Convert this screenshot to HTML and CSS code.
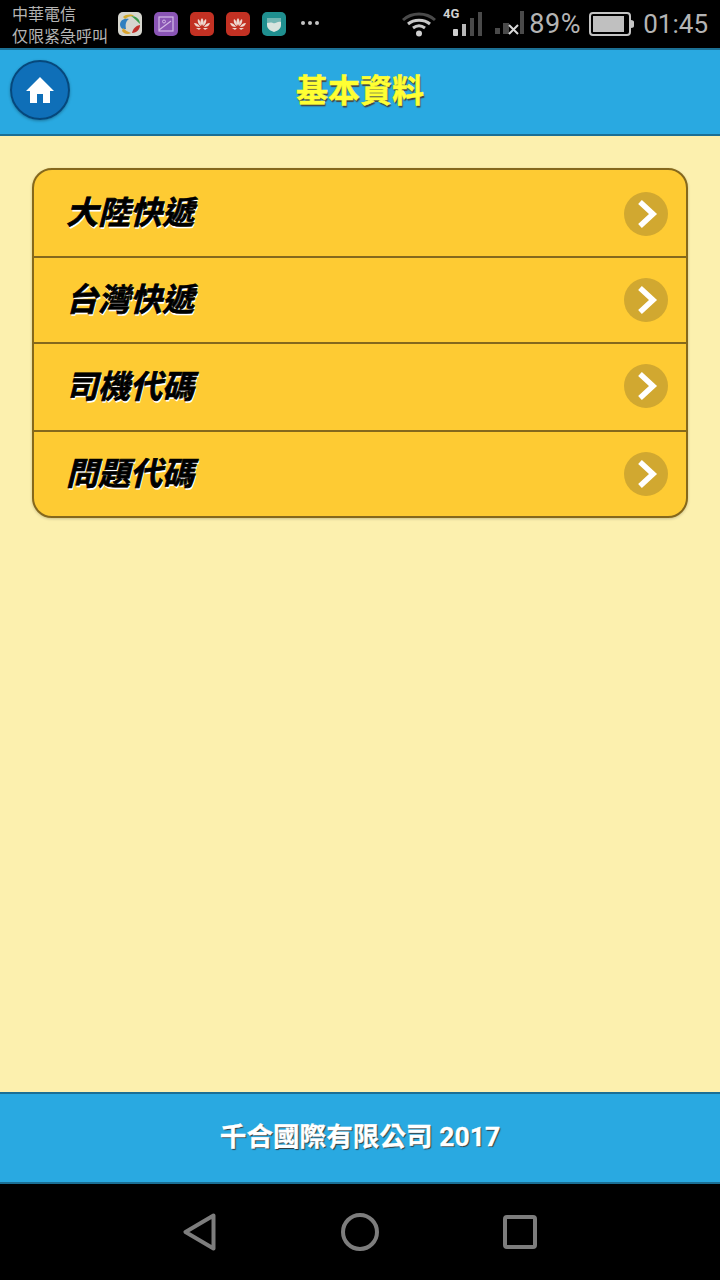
FILE: index.html

```html
<!DOCTYPE html>
<html lang="zh-Hant">
<head>
  <meta charset="UTF-8">
  <title>基本資料</title>
  <link rel="stylesheet" href="styles.css">
</head>
<body>
  <div class="status-bar">
    <div class="carrier">
      <div>中華電信</div>
      <div>仅限紧急呼叫</div>
    </div>
    <div class="notify-icons">
      <svg class="app-icon" viewBox="0 0 24 24">
        <rect width="24" height="24" rx="5" fill="#d6d6ce"/>
        <path d="M2 13c0-5 4-7 9-6-3 2-4 5-3 10-3 1-5 0-6-4z" fill="#2f7fc0"/>
        <path d="M5 5c3-3 9-3 11-1-4 0-7 1-9 3z" fill="#d0a92c"/>
        <path d="M13 4c5 0 9 3 9 8-3-3-5-5-9-8z" fill="#3a9a4a"/>
        <path d="M22 13c0 4-3 8-8 8 1-4 3-7 8-8z" fill="#c0302a"/>
        <path d="M5 16c2 2 5 4 8 5-3 2-7 1-9-2z" fill="#d9a32e"/>
      </svg>
      <svg class="app-icon" viewBox="0 0 24 24">
        <rect width="24" height="24" rx="5" fill="#8a55b5"/>
        <rect x="5" y="5" width="14" height="14" fill="none" stroke="#d3b9e6" stroke-width="1.200"/>
        <circle cx="10" cy="9.500" r="1.500" fill="none" stroke="#d3b9e6"/>
        <path d="M5 18l12-9" stroke="#d3b9e6" stroke-width="1.200"/>
      </svg>
      <svg class="app-icon" viewBox="0 0 24 24">
        <rect width="24" height="24" rx="5" fill="#c23123"/>
        <path d="M12 6c2 2 2 5 0 8-2-3-2-6 0-8zM8 7c2 1 3 4 3 7-2-1-4-4-3-7zM16 7c1 3-1 6-3 7 0-3 1-6 3-7zM4 11c3 0 5 2 6 4-3 0-5-1-6-4zM20 11c-1 3-3 4-6 4 1-2 3-4 6-4zM6 16h5l-2 2zM18 16h-5l2 2z" fill="#eed9d0"/>
      </svg>
      <svg class="app-icon" viewBox="0 0 24 24">
        <rect width="24" height="24" rx="5" fill="#c23123"/>
        <path d="M12 6c2 2 2 5 0 8-2-3-2-6 0-8zM8 7c2 1 3 4 3 7-2-1-4-4-3-7zM16 7c1 3-1 6-3 7 0-3 1-6 3-7zM4 11c3 0 5 2 6 4-3 0-5-1-6-4zM20 11c-1 3-3 4-6 4 1-2 3-4 6-4zM6 16h5l-2 2zM18 16h-5l2 2z" fill="#eed9d0"/>
      </svg>
      <svg class="app-icon" viewBox="0 0 24 24">
        <rect width="24" height="24" rx="5" fill="#1f8f8f"/>
        <path d="M5 6h14v7c0 4-4 6-7 7-3-1-7-3-7-7z" fill="#d8e4de"/>
        <path d="M5 6h14v4c-4-1-5 2-8 1-3-1-4 0-6 0z" fill="#1f8f8f" opacity=".55"/>
      </svg>
      <div class="more-dots">
        <span></span><span></span><span></span>
      </div>
    </div>
    <div class="status-right">
      <svg class="wifi" viewBox="0 0 34 26">
        <path d="M1 9c9-8 23-8 32 0" fill="none" stroke="#4a4a4a" stroke-width="3"/>
        <path d="M6 13c6-5 16-5 22 0" fill="none" stroke="#c8c8c8" stroke-width="3"/>
        <path d="M11 17c4-3 8-3 12 0" fill="none" stroke="#c8c8c8" stroke-width="3"/>
        <circle cx="17" cy="22.500" r="3" fill="#d0d0d0"/>
      </svg>
      <svg class="signal" viewBox="0 0 40 36">
        <text x="1" y="13" class="net-type">4G</text>
        <rect x="11" y="24" width="5" height="7" rx="1" fill="#d0d0d0"/>
        <rect x="20" y="19" width="4" height="12" fill="#b8b8b8"/>
        <rect x="28" y="13" width="4" height="18" fill="#4a4a4a"/>
        <rect x="36" y="7" width="4" height="24" fill="#4a4a4a"/>
      </svg>
      <svg class="signal-x" viewBox="0 0 32 28">
        <rect x="2" y="17" width="5" height="6" fill="#4a4a4a"/>
        <rect x="10" y="12" width="6" height="11" fill="#4a4a4a"/>
        <rect x="27" y="0" width="4" height="23" fill="#4a4a4a"/>
        <path d="M16 14l9 9M25 14l-9 9" stroke="#d8d8d8" stroke-width="2"/>
      </svg>
      <span class="percent">89%</span>
      <svg class="battery" viewBox="0 0 46 24">
        <rect x="1" y="1" width="40" height="22" rx="3" fill="none" stroke="#c4c4c4" stroke-width="2"/>
        <rect x="4" y="4" width="31" height="16" fill="#c0c0c0"/>
        <path d="M42 8c2 0 3 1 3 2v4c0 1-1 2-3 2z" fill="#c4c4c4"/>
      </svg>
      <span class="clock">01:45</span>
    </div>
  </div>

  <header class="top-bar">
    <a class="home-btn">
      <svg viewBox="0 0 28 28" width="28" height="28">
        <path d="M14 1L0 15h4v12h7v-9h6v9h7V15h4z" fill="#fff"/>
      </svg>
    </a>
    <h1>基本資料</h1>
  </header>

  <main class="content">
    <ul class="menu">
      <li class="menu-row">
        <span>大陸快遞</span>
        <svg class="arrow" viewBox="0 0 44 44"><circle cx="22" cy="22" r="22"/><path d="M16 10l13 12-13 12"/></svg>
      </li>
      <li class="menu-row">
        <span>台灣快遞</span>
        <svg class="arrow" viewBox="0 0 44 44"><circle cx="22" cy="22" r="22"/><path d="M16 10l13 12-13 12"/></svg>
      </li>
      <li class="menu-row">
        <span>司機代碼</span>
        <svg class="arrow" viewBox="0 0 44 44"><circle cx="22" cy="22" r="22"/><path d="M16 10l13 12-13 12"/></svg>
      </li>
      <li class="menu-row">
        <span>問題代碼</span>
        <svg class="arrow" viewBox="0 0 44 44"><circle cx="22" cy="22" r="22"/><path d="M16 10l13 12-13 12"/></svg>
      </li>
    </ul>
  </main>

  <footer class="bottom-bar"><span>千合國際有限公司 2017</span></footer>

  <nav class="nav-bar">
    <svg viewBox="0 0 34 38" width="34" height="38" class="nav-icon"><path d="M30.500 2.500L2.500 19l28 16.500z"/></svg>
    <svg viewBox="0 0 38 38" width="38" height="38" class="nav-icon"><circle cx="19" cy="19" r="17"/></svg>
    <svg viewBox="0 0 34 34" width="34" height="34" class="nav-icon"><rect x="2" y="2" width="30" height="30" rx="2"/></svg>
  </nav>
</body>
</html>
```

FILE: styles.css

```css
* { box-sizing: border-box; }
html, body { margin: 0; padding: 0; }
body {
  width: 720px; height: 1280px;
  display: flex; flex-direction: column;
  font-family: Roboto, "Noto Sans CJK TC", sans-serif;
  background: #000;
}

/* status bar */
.status-bar {
  height: 48px; background: #000; color: #b4b4b4;
  display: flex; align-items: center;
  padding: 0 12px;
}
.carrier { font-size: 16px; line-height: 22px; width: 106px; margin-top: 4px; }
.notify-icons { display: flex; align-items: center; gap: 12px; }
.app-icon { width: 24px; height: 24px; display: block; }
.more-dots { display: flex; gap: 3px; margin-left: 3px; margin-top: -2px; }
.more-dots span { width: 4px; height: 4px; border-radius: 50%; background: #c4c4c4; }
.status-right { margin-left: auto; display: flex; align-items: center; }
.wifi { width: 34px; height: 26px; margin-right: 6px; }
.signal { width: 40px; height: 36px; margin-right: 11px; margin-top: -2px; }
.net-type { font: bold 13px Roboto, sans-serif; fill: #d0d0d0; }
.signal-x { width: 32px; height: 28px; margin-right: 4px; margin-top: 2px; }
.percent { font-size: 27px; letter-spacing: .6px; margin-right: 8px; }
.battery { width: 46px; height: 24px; margin-right: 8px; }
.clock { font-size: 26px; }

/* header */
.top-bar {
  height: 88px; background: #29a9e1;
  border-top: 2px solid #1b7196; border-bottom: 2px solid #1b6f94;
  display: grid; grid-template-columns: 1fr auto 1fr; align-items: center;
  padding: 0 10px;
}
.home-btn {
  width: 60px; height: 60px; border-radius: 50%; margin-bottom: 4px;
  background: radial-gradient(circle, #0f6fb8 0, #0f6fb8 68%, #0a62a6 100%);
  border: 2px solid #06487c;
  box-shadow: 0 1px 3px rgba(0,0,0,.3);
  display: flex; align-items: center; justify-content: center;
}
.top-bar h1 {
  margin: 0 0 8px; font-size: 32px; font-weight: bold; color: #ffff33;
  -webkit-text-stroke: .5px #ffff33;
  text-shadow: 1px 2px 1px #444;
}

/* list */
.content { flex: 1; background: #fcf0ae; padding: 32px; }
.menu {
  list-style: none; margin: 0; padding: 0;
  border: 2px solid #85681c; border-radius: 20px;
  background: #fecb33; overflow: hidden;
  box-shadow: 0 1px 3px rgba(0,0,0,.2);
}
.menu-row {
  height: 88px; padding: 0 18px 0 32px;
  display: flex; align-items: center; justify-content: space-between;
  border-bottom: 2px solid #85681c;
}
.menu-row:nth-child(even) { height: 86px; }
.menu-row:last-child { height: 84px; border-bottom: 0; }
.menu-row:nth-child(1) .arrow { margin-top: 2px; }
.menu-row:nth-child(3) .arrow { margin-bottom: 2px; }
.menu-row span {
  font-size: 32px; font-weight: bold; font-style: italic; color: #000;
  margin-bottom: 7px;
  -webkit-text-stroke: .7px #000;
  text-shadow: 1px 2px 0 #fff;
}
.arrow { width: 44px; height: 44px; display: block; }
.arrow circle { fill: #d1a830; }
.arrow path { fill: none; stroke: #fff; stroke-width: 5.500; }

/* footer */
.bottom-bar {
  height: 92px; background: #29a9e1;
  border-top: 2px solid #1b6f94; border-bottom: 2px solid #1b6f94;
  display: flex; align-items: center; justify-content: center;
  color: #fff; font-size: 26.600px; font-weight: bold;
  -webkit-text-stroke: .3px #fff;
  text-shadow: 1px 1px 1px #333;
}
.bottom-bar span { margin-bottom: 8px; }

/* android nav */
.nav-bar {
  height: 96px; background: #000;
  display: flex; align-items: center; justify-content: center; gap: 124px;
}
.nav-icon { fill: none; stroke: #7d7d7d; stroke-width: 4; stroke-linejoin: round; }
```
